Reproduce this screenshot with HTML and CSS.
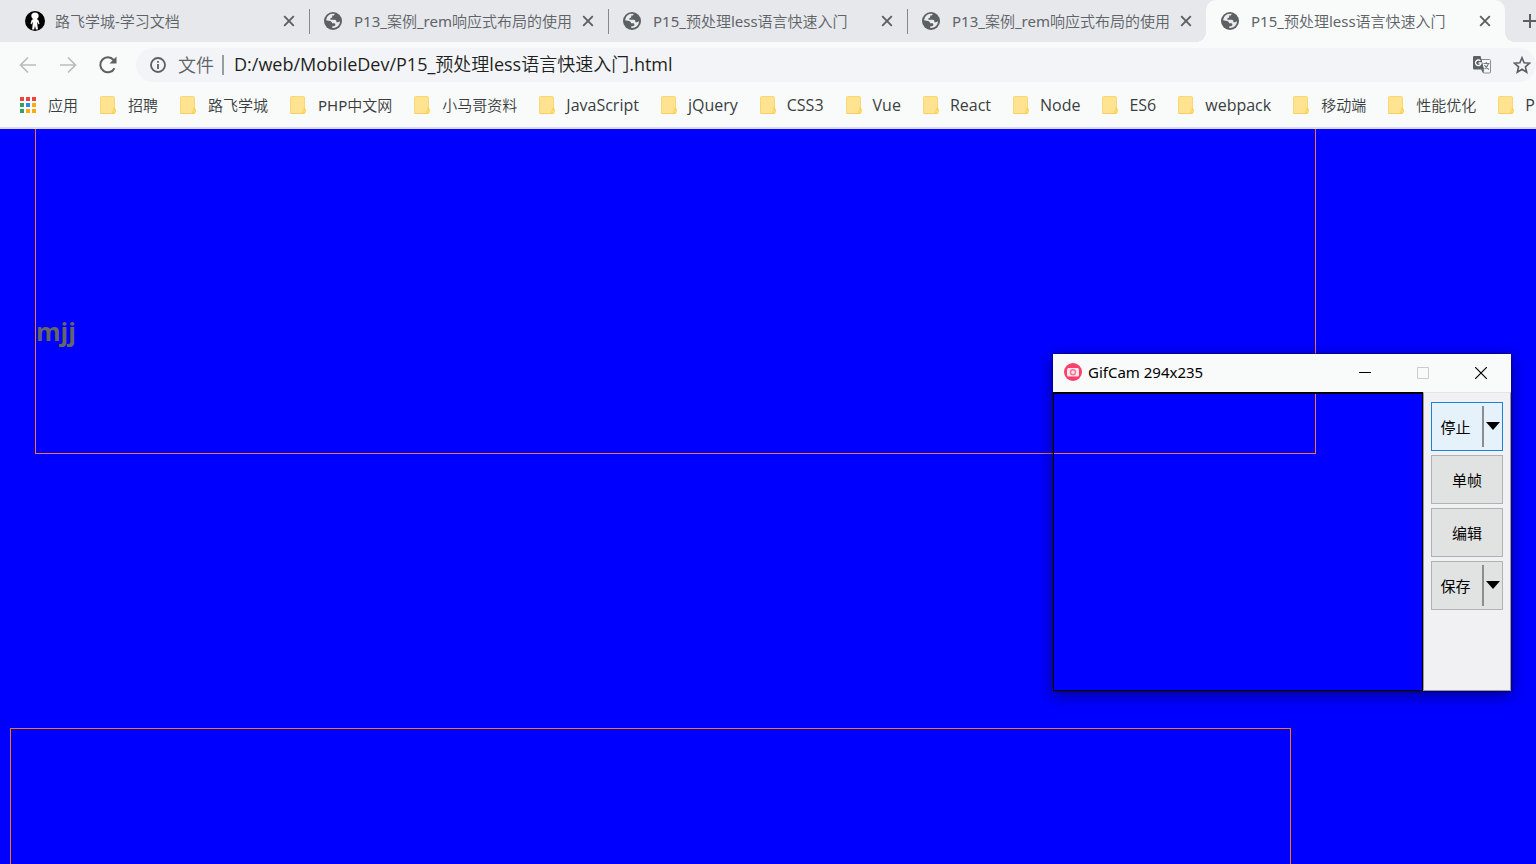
FILE: index.html
```html
<!DOCTYPE html>
<html lang="zh-CN">
<head>
<meta charset="utf-8">
<title>P15_预处理less语言快速入门</title>
<link rel="stylesheet" href="styles.css">
</head>
<body>
<svg class="defs" aria-hidden="true">
  <symbol id="globe" viewBox="0 0 18 18">
    <circle cx="9" cy="9" r="9" fill="#5b6063"/>
    <path fill="#e9ebee" d="M10.800 1.900 9.800 3.600H8.200v1.900L6.400 6.300v1.500h4.300c1.200 0 1.700.7 1.700 1.700v.7h1.500c.9 0 1.500-.7 2.200-1.200A7 7 0 0 1 8.300 16v-1.800h1.500c1 0 1.600-.7 1.600-1.600s-.7-1.400-1.600-1.400H8.200c-.5-1.300-1-1.900-2.200-2.200L2 8.200A7 7 0 0 1 10.800 1.900z"/>
  </symbol>
  <symbol id="close" viewBox="0 0 12 12"><path d="M1.200 1.200 10.800 10.800M10.800 1.200 1.200 10.800" stroke="#5b6063" stroke-width="1.900" fill="none"/></symbol>
  <symbol id="folder" viewBox="0 0 16 18">
    <path d="M1.500.5h12a1.500 1.500 0 0 1 1.500 1.500v15a1 1 0 0 1-1 1H1.500A1.500 1.500 0 0 1 0 16.500V2A1.500 1.500 0 0 1 1.500.5z" fill="#ffe391"/>
    <path d="M.5 17V1.500a1 1 0 0 1 1-1H13a1.500 1.500 0 0 1 1.500 1.500v10" fill="none" stroke="#f8d775"/>
    <path d="M.5 17.500H13" stroke="#f5cf62"/>
    <path d="M13.500 11.500c1.500 0 2.500 1.500 2.500 3s-.8 3.500-2.300 3.500c-1.200 0-1.700-.8-1.700-1.800s1-1.200 1-2.200z" fill="#ffd24d"/>
    <path d="M13.500 14c.9 0 1.200.6 1.200 1.300s-.5 1.300-1.200 1.300z" fill="#ffe9a6"/>
  </symbol>
</svg>

<header class="browser">
  <nav class="tabs" aria-label="标签页">
    <div class="tab">
      <svg class="avatar" viewBox="0 0 20 20"><circle cx="10" cy="10" r="10" fill="#000"/><path fill="#fff" d="M10 1.500c2.300 0 3.700 1.500 3.700 3.300 0 1.600-.9 2.600-1.900 3.200l1.700 1.200 1 3.700-1 .3-1.100-2.400-.1 2 .6 5.700h-2.100L10 14.500l-.8 4H7.100l.6-5.700-.1-2-1.100 2.400-1-.3 1-3.700L8.200 8C7.200 7.400 6.300 6.400 6.300 4.800c0-1.800 1.400-3.300 3.700-3.300z"/></svg>
      <span class="tab-title">路飞学城-学习文档</span>
      <button class="tab-close" aria-label="关闭"><svg><use href="#close"/></svg></button>
    </div>
    <div class="tab divided">
      <svg class="globe"><use href="#globe"/></svg>
      <span class="tab-title">P13_案例_rem响应式布局的使用</span>
      <button class="tab-close" aria-label="关闭"><svg><use href="#close"/></svg></button>
    </div>
    <div class="tab divided">
      <svg class="globe"><use href="#globe"/></svg>
      <span class="tab-title">P15_预处理less语言快速入门</span>
      <button class="tab-close" aria-label="关闭"><svg><use href="#close"/></svg></button>
    </div>
    <div class="tab divided">
      <svg class="globe"><use href="#globe"/></svg>
      <span class="tab-title">P13_案例_rem响应式布局的使用</span>
      <button class="tab-close" aria-label="关闭"><svg><use href="#close"/></svg></button>
    </div>
    <div class="tab active">
      <svg class="globe"><use href="#globe"/></svg>
      <span class="tab-title">P15_预处理less语言快速入门</span>
      <button class="tab-close" aria-label="关闭"><svg><use href="#close"/></svg></button>
    </div>
    <button class="new-tab" aria-label="新标签页"><svg viewBox="0 0 14 14"><path d="M7 0v14M0 7h14" stroke="#5b6063" stroke-width="2"/></svg></button>
  </nav>

  <div class="toolbar">
    <button class="nav-button" aria-label="后退"><svg viewBox="0 0 20 20"><path d="M18 10H3M10 2.500 2.500 10l7.500 7.500" fill="none" stroke="#babcbe" stroke-width="1.700"/></svg></button>
    <button class="nav-button" aria-label="前进"><svg viewBox="0 0 20 20"><path d="M2 10h15M10 2.500 17.500 10 10 17.500" fill="none" stroke="#babcbe" stroke-width="1.700"/></svg></button>
    <button class="nav-button" aria-label="刷新"><svg viewBox="0 0 20 20"><path d="M16.500 13.200A7.500 7.500 0 1 1 15.600 5" fill="none" stroke="#5b6063" stroke-width="2"/><path d="M18.500 1.500v7h-7z" fill="#5b6063"/></svg></button>
    <div class="omnibox">
      <svg class="info" viewBox="0 0 16 16"><circle cx="8" cy="8" r="7" fill="none" stroke="#5b6063" stroke-width="1.800"/><path d="M8 7v5M8 4v1.800" stroke="#5b6063" stroke-width="1.800"/></svg>
      <label class="scheme" for="url">文件</label>
      <input class="url" id="url" type="text" value="D:/web/MobileDev/P15_预处理less语言快速入门.html">
      <button class="omni-button" aria-label="翻译"><svg viewBox="0 0 18 18"><path d="M8 3.500h8.500a1 1 0 0 1 1 1v11.500a1 1 0 0 1-1 1h-6z" fill="#f6f7f8" stroke="#8a8e91"/><path d="M1.300 0h6.200l3.600 13.500H1.300A1.300 1.300 0 0 1 0 12.200V1.300A1.300 1.300 0 0 1 1.300 0z" fill="#5b6063"/><path d="M7.300 4.800a2.800 2.800 0 1 0 .8 2.200H5.600" fill="none" stroke="#fff" stroke-width="1.300"/><path d="M8 13.500h3L10 17z" fill="#5b6063"/><path d="M10.500 7.500h6M13.300 6v1.500M15.500 7.500c-.6 2.500-2.300 4-4 5.500M11.500 9c1 2 2.500 3.500 4.500 4.500" fill="none" stroke="#777b7e" stroke-width="1.100"/></svg></button>
      <button class="omni-button" aria-label="收藏"><svg viewBox="0 0 18 18"><path d="m9 1.700 2.100 5.100 5.500.4-4.200 3.600 1.300 5.400L9 13.300l-4.700 2.900 1.300-5.400-4.200-3.600 5.500-.4z" fill="none" stroke="#5b6063" stroke-width="1.600"/></svg></button>
    </div>
  </div>

  <nav class="bookmarks" aria-label="书签">
    <a class="bookmark" href="#"><svg viewBox="0 0 16 16"><path d="M0 0h4v4H0zM6 0h4v4H6zM12 0h4v4h-4z" fill="#f0443a"/><path d="M0 6h4v4H0zM0 12h4v4H0z" fill="#34a162"/><path d="M6 6h4v4H6z" fill="#2b8df0"/><path d="M12 6h4v4h-4zM6 12h4v4H6zM12 12h4v4h-4z" fill="#fbac10"/></svg>应用</a>
    <a class="bookmark" href="#"><svg><use href="#folder"/></svg>招聘</a>
    <a class="bookmark" href="#"><svg><use href="#folder"/></svg>路飞学城</a>
    <a class="bookmark" href="#"><svg><use href="#folder"/></svg>PHP中文网</a>
    <a class="bookmark" href="#"><svg><use href="#folder"/></svg>小马哥资料</a>
    <a class="bookmark latin" href="#"><svg><use href="#folder"/></svg>JavaScript</a>
    <a class="bookmark latin" href="#"><svg><use href="#folder"/></svg>jQuery</a>
    <a class="bookmark latin" href="#"><svg><use href="#folder"/></svg>CSS3</a>
    <a class="bookmark latin" href="#"><svg><use href="#folder"/></svg>Vue</a>
    <a class="bookmark latin" href="#"><svg><use href="#folder"/></svg>React</a>
    <a class="bookmark latin" href="#"><svg><use href="#folder"/></svg>Node</a>
    <a class="bookmark latin" href="#"><svg><use href="#folder"/></svg>ES6</a>
    <a class="bookmark latin" href="#"><svg><use href="#folder"/></svg>webpack</a>
    <a class="bookmark" href="#"><svg><use href="#folder"/></svg>移动端</a>
    <a class="bookmark" href="#"><svg><use href="#folder"/></svg>性能优化</a>
    <a class="bookmark latin" href="#"><svg><use href="#folder"/></svg>P</a>
  </nav>
</header>

<main class="page">
  <section class="box first"><h2>mjj</h2></section>
  <section class="box second"></section>
</main>

<aside class="gifcam" aria-label="GifCam">
  <div class="titlebar">
    <svg class="logo" viewBox="0 0 18 18"><circle cx="9" cy="9" r="9" fill="#fb416b"/><rect x="3" y="5" width="12" height="8.500" rx="1.500" fill="#ffe6ec"/><circle cx="9" cy="9.200" r="3.200" fill="#fb7895"/><circle cx="9" cy="9.200" r="1.700" fill="#ffe6ec"/></svg>
    <span class="caption">GifCam 294x235</span>
    <button class="window-button" aria-label="最小化"><svg viewBox="0 0 12 12"><path d="M0 5.500h12" stroke="#000"/></svg></button>
    <button class="window-button" aria-label="最大化" disabled><svg viewBox="0 0 12 12"><path d="M.5.5h11v11H.5z" fill="none" stroke="#ccc"/></svg></button>
    <button class="window-button" aria-label="关闭"><svg viewBox="0 0 12 12"><path d="m0 0 12 12M12 0 0 12" stroke="#000" stroke-width="1.200"/></svg></button>
  </div>
  <div class="capture">
    <div class="viewport"></div>
    <div class="panel">
      <div class="control split recording">
        <button class="action">停止</button>
        <button class="menu" aria-label="停止选项"><svg viewBox="0 0 14 8"><path d="M0 0h14L7 8z"/></svg></button>
      </div>
      <button class="control">单帧</button>
      <button class="control">编辑</button>
      <div class="control split">
        <button class="action">保存</button>
        <button class="menu" aria-label="保存选项"><svg viewBox="0 0 14 8"><path d="M0 0h14L7 8z"/></svg></button>
      </div>
    </div>
  </div>
</aside>
</body>
</html>
```
FILE: styles.css
```css
* { box-sizing: border-box; }
body {
  margin: 0;
  min-height: 100vh;
  display: flex;
  flex-direction: column;
  position: relative;
  overflow: hidden;
  background: #00f;
  font: 400 15px/20px "Noto Sans", "Noto Sans CJK SC DemiLight", "Noto Sans CJK SC Light", "Noto Sans CJK SC", sans-serif;
  color: #3f4245;
}
button {
  border: 0;
  padding: 0;
  background: none;
  font: inherit;
  color: inherit;
  display: flex;
  align-items: center;
  justify-content: center;
  flex: none;
}
svg { display: block; flex: none; }
.defs { position: absolute; width: 0; height: 0; }

.browser {
  background: #f9fbfb;
  border-bottom: 2px solid #d9dcdd;
  overflow: hidden;
}
.tabs {
  display: flex;
  height: 42px;
  padding-left: 10px;
  background: #e6e8ec;
}
.tab {
  flex: none;
  width: 299px;
  height: 42px;
  display: flex;
  align-items: center;
  padding: 0 10px 0 15px;
  color: #5f6367;
  position: relative;
}
.divided::before {
  content: "";
  position: absolute;
  left: 0;
  top: 9px;
  width: 1px;
  height: 25px;
  background: #85898d;
}
.tab.active {
  background: #f9fbfb;
  border-radius: 10px 10px 0 0;
}
.tab.active::before, .tab.active::after {
  content: "";
  position: absolute;
  bottom: 0;
  width: 10px;
  height: 10px;
}
.tab.active::before {
  right: 100%;
  background: radial-gradient(circle at 0 0, #e6e8ec 10px, #f9fbfb 10px);
}
.tab.active::after {
  left: 100%;
  background: radial-gradient(circle at 100% 0, #e6e8ec 10px, #f9fbfb 10px);
}
.avatar { width: 20px; height: 20px; margin-right: 10px; }
.globe { width: 18px; height: 18px; margin-right: 12px; }
.tab-title { flex: 1; white-space: nowrap; overflow: hidden; }
.tab-close { width: 20px; height: 20px; }
.tab-close svg { width: 12px; height: 12px; }
.new-tab { width: 50px; }
.new-tab svg { width: 14px; height: 14px; }

.toolbar {
  display: flex;
  align-items: center;
  height: 46px;
  padding-left: 8px;
}
.nav-button { width: 40px; height: 40px; }
.nav-button svg { width: 20px; height: 20px; }
.omnibox {
  flex: 1;
  display: flex;
  align-items: center;
  height: 34px;
  margin-left: 8px;
  padding: 0 4px 0 14px;
  border-radius: 17px;
  background: #f3f4f7;
  font-family: "Open Sans", "Noto Sans CJK SC DemiLight", "Noto Sans CJK SC Light", "Noto Sans CJK SC", sans-serif;
  font-size: 18px;
  line-height: 24px;
}
.info { width: 16px; height: 16px; margin-right: 12px; }
.scheme {
  color: #5f6367;
  padding-right: 8px;
  line-height: 20px;
  border-right: 2px solid #999da0;
}
.url {
  flex: 1;
  min-width: 0;
  border: 0;
  padding: 0 0 2px 10px;
  background: none;
  font: inherit;
  color: #1d1f21;
}
.omni-button { width: 20px; height: 24px; margin-left: 20px; }
.omni-button svg { width: 18px; height: 18px; }

.bookmarks {
  display: flex;
  align-items: center;
  height: 39px;
  padding: 0 0 6px 20px;
  gap: 22px;
}
.bookmark {
  display: flex;
  align-items: center;
  flex: none;
  gap: 12px;
  color: #3a3d40;
  text-decoration: none;
  white-space: nowrap;
}
.bookmark svg { width: 16px; height: 18px; }
.latin { gap: 11px; font-family: "Open Sans", sans-serif; font-size: 16px; }

.page { flex: 1; display: flex; flex-direction: column; }
.box { width: 83.4%; border: 1px solid #ef7446; }
.first {
  height: 325px;
  margin-left: 35px;
  border-top: 0;
}
.first h2 {
  margin: 184px 0 0;
  font-family: "Open Sans", sans-serif;
  font-size: 25px;
  line-height: 36px;
  font-weight: 700;
  color: #666;
}
.second {
  flex: 1;
  margin: 274px 0 0 10px;
  border-color: #ff7800;
  border-bottom: 0;
}

.gifcam {
  position: absolute;
  top: 354px;
  right: 25px;
  width: 458px;
  box-shadow: 0 4px 14px rgba(0, 0, 30, .5), 0 0 2px #111;
  color: #000;
}
.titlebar {
  display: flex;
  align-items: center;
  height: 38px;
  padding: 0 1px 2px 11px;
  background: #f9fbfb;
}
.logo { width: 18px; height: 18px; margin-right: 6px; }
.caption { flex: 1; }
.window-button { width: 58px; height: 36px; padding-top: 2px; }
.window-button svg { width: 12px; height: 12px; }
.capture { display: flex; height: 299px; }
.viewport { flex: 1; border: 1px solid #000; border-top-width: 2px; }
.panel {
  width: 88px;
  display: flex;
  flex-direction: column;
  gap: 4px;
  padding: 9px 7px;
  background: #f1f1f3;
  border: 1px solid #999;
  border-top-color: #e2e4ea;
}
.control {
  width: 100%;
  height: 49px;
  border: 1px solid #b0b3b3;
  background: #e1e3e3;
  font-family: "Noto Sans", "Noto Sans CJK SC", sans-serif;
}
.split { display: flex; }
.recording { background: #e5f1fb; border: 1px solid #1784d8; }
.action { flex: 1; margin-right: 3px; }
.menu {
  width: 20px;
  margin: 3px 0;
  padding: 0 1px 2px 0;
  border-left: 2px solid #8b8d8e;
}
.menu svg { width: 14px; height: 8px; }
```
